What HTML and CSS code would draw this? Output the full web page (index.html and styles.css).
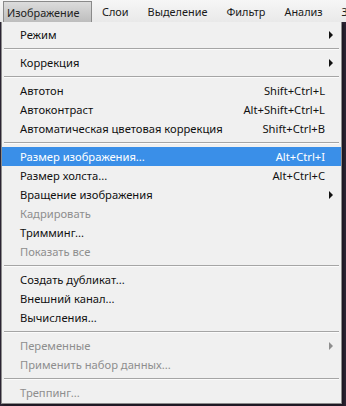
FILE: index.html
```html
<!DOCTYPE html>
<html lang="ru">
<head>
<meta charset="utf-8">
<link rel="stylesheet" href="styles.css">
</head>
<body>
<div class="menubar">
  <span class="top active">Изображение</span>
  <span class="top">Слои</span>
  <span class="top">Выделение</span>
  <span class="top">Фильтр</span>
  <span class="top">Анализ</span>
  <span class="top">З</span>
</div>
<div class="stage">
  <div class="menu">
    <div class="row"><span>Режим</span><span class="arrow"></span></div>
    <div class="sep"></div>
    <div class="row"><span>Коррекция</span><span class="arrow"></span></div>
    <div class="sep"></div>
    <div class="row"><span>Автотон</span><span class="key">Shift+Ctrl+L</span></div>
    <div class="row"><span>Автоконтраст</span><span class="key">Alt+Shift+Ctrl+L</span></div>
    <div class="row"><span>Автоматическая цветовая коррекция</span><span class="key">Shift+Ctrl+B</span></div>
    <div class="sep"></div>
    <div class="row hl"><span>Размер изображения...</span><span class="key">Alt+Ctrl+I</span></div>
    <div class="row"><span>Размер холста...</span><span class="key">Alt+Ctrl+C</span></div>
    <div class="row"><span>Вращение изображения</span><span class="arrow"></span></div>
    <div class="row dis"><span>Кадрировать</span></div>
    <div class="row"><span>Тримминг...</span></div>
    <div class="row dis"><span>Показать все</span></div>
    <div class="sep"></div>
    <div class="row"><span>Создать дубликат...</span></div>
    <div class="row"><span>Внешний канал...</span></div>
    <div class="row"><span>Вычисления...</span></div>
    <div class="sep"></div>
    <div class="row dis"><span>Переменные</span><span class="arrow"></span></div>
    <div class="row dis"><span>Применить набор данных...</span></div>
    <div class="sep"></div>
    <div class="row dis"><span>Треппинг...</span></div>
  </div>
</div>
</body>
</html>
```
FILE: styles.css
```css
html, body {
  margin: 0;
  padding: 0;
}
body {
  width: 346px;
  height: 406px;
  overflow: hidden;
  background: #2b2433;
  font-family: "Noto Sans", "Open Sans", sans-serif;
  font-size: 11.2px;
  color: #111;
}
.menubar {
  height: 22px;
  display: flex;
  align-items: stretch;
  background: linear-gradient(#f6f6f6, #e9e9e9);
  box-sizing: border-box;
  padding-top: 1px;
  white-space: nowrap;
  overflow: hidden;
  font-size: 10.9px;
}
.top {
  display: flex;
  align-items: center;
  padding: 0 9.5px;
  color: #1a1a1a;
}
.top.active {
  margin-left: 3px;
  padding: 0 12px 0 3px;
  border: 1px solid #8a8a8a;
  border-bottom: none;
  background: linear-gradient(#dcdcdc, #bdbdbd);
  color: #222;
}
.stage {
  display: flex;
}
.menu {
  margin-left: 1px;
  width: 341px;
  box-sizing: border-box;
  background: #f0f0f0;
  border: 1px solid #8c8c8c;
  border-top: none;
  padding: 3px 0 1px;
  box-shadow: 2px 2px 2px rgba(0,0,0,0.35);
}
.row {
  height: 19px;
  line-height: 19px;
  display: flex;
  justify-content: space-between;
  align-items: center;
  padding: 0 16px 0 18px;
  white-space: nowrap;
}
.row.hl {
  background: #3a8fe8;
  color: #fff;
}
.row.dis {
  color: #8e8e8e;
}
.arrow {
  width: 0;
  height: 0;
  border-top: 4px solid transparent;
  border-bottom: 4px solid transparent;
  border-left: 4px solid #111;
  margin-right: -8px;
}
.dis .arrow {
  border-left-color: #8e8e8e;
}
.sep {
  height: 1px;
  margin: 4px 2px 3px 2px;
  background: #a5a5a5;
  border-bottom: 1px solid #fbfbfb;
}
```
